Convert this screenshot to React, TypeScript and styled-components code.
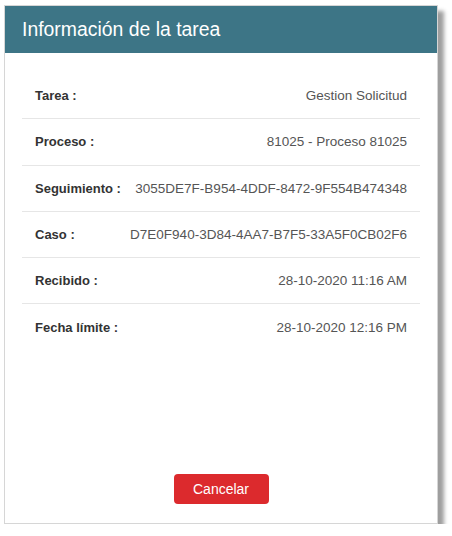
import styled, { createGlobalStyle } from 'styled-components';

const GlobalStyle = createGlobalStyle`
  html, body {
    margin: 0;
    padding: 0;
    background: #fff;
    font-family: "Liberation Sans", Arial, sans-serif;
  }
`;

const Page = styled.div`
  padding: 5px 0 0 4px;
`;

const Panel = styled.div`
  width: 432px;
  height: 517px;
  display: flex;
  flex-direction: column;
  background: #fff;
  border: 1px solid #d6d6d6;
  box-shadow: 6px 6px 4px rgba(0, 0, 0, 0.38);
`;

const Header = styled.div`
  height: 47px;
  display: flex;
  align-items: center;
  padding: 0 17px;
  background-color: #3d7586;
  color: #fff;
  font-size: 19.4px;
`;

const Body = styled.div`
  flex: 1;
  padding: 20px 17px 0;
`;

const Row = styled.div<{ last?: boolean }>`
  height: 45.3px;
  display: flex;
  align-items: center;
  justify-content: space-between;
  padding: 0 13px;
  border-bottom: ${(p) => (p.last ? 'none' : '1px solid #e6e6e6')};
`;

const Label = styled.span`
  font-size: 13px;
  font-weight: bold;
  color: #333;
`;

const Value = styled.span`
  font-size: 13.5px;
  color: #555;
`;

const Footer = styled.div`
  display: flex;
  justify-content: center;
  padding-bottom: 19px;
`;

const CancelButton = styled.button`
  width: 95px;
  height: 30px;
  border: none;
  border-radius: 4px;
  background-color: #dc2a2d;
  color: #fff;
  font-family: inherit;
  font-size: 14px;
  cursor: pointer;
`;

const rows = [
  ['Tarea :', 'Gestion Solicitud'],
  ['Proceso :', '81025 - Proceso 81025'],
  ['Seguimiento :', '3055DE7F-B954-4DDF-8472-9F554B474348'],
  ['Caso :', 'D7E0F940-3D84-4AA7-B7F5-33A5F0CB02F6'],
  ['Recibido :', '28-10-2020 11:16 AM'],
  ['Fecha límite :', '28-10-2020 12:16 PM'],
];

export default function App() {
  return (
    <Page>
      <GlobalStyle />
      <Panel>
        <Header>Información de la tarea</Header>
        <Body>
          {rows.map(([label, value], i) => (
            <Row key={label} last={i === rows.length - 1}>
              <Label>{label}</Label>
              <Value>{value}</Value>
            </Row>
          ))}
        </Body>
        <Footer>
          <CancelButton>Cancelar</CancelButton>
        </Footer>
      </Panel>
    </Page>
  );
}
